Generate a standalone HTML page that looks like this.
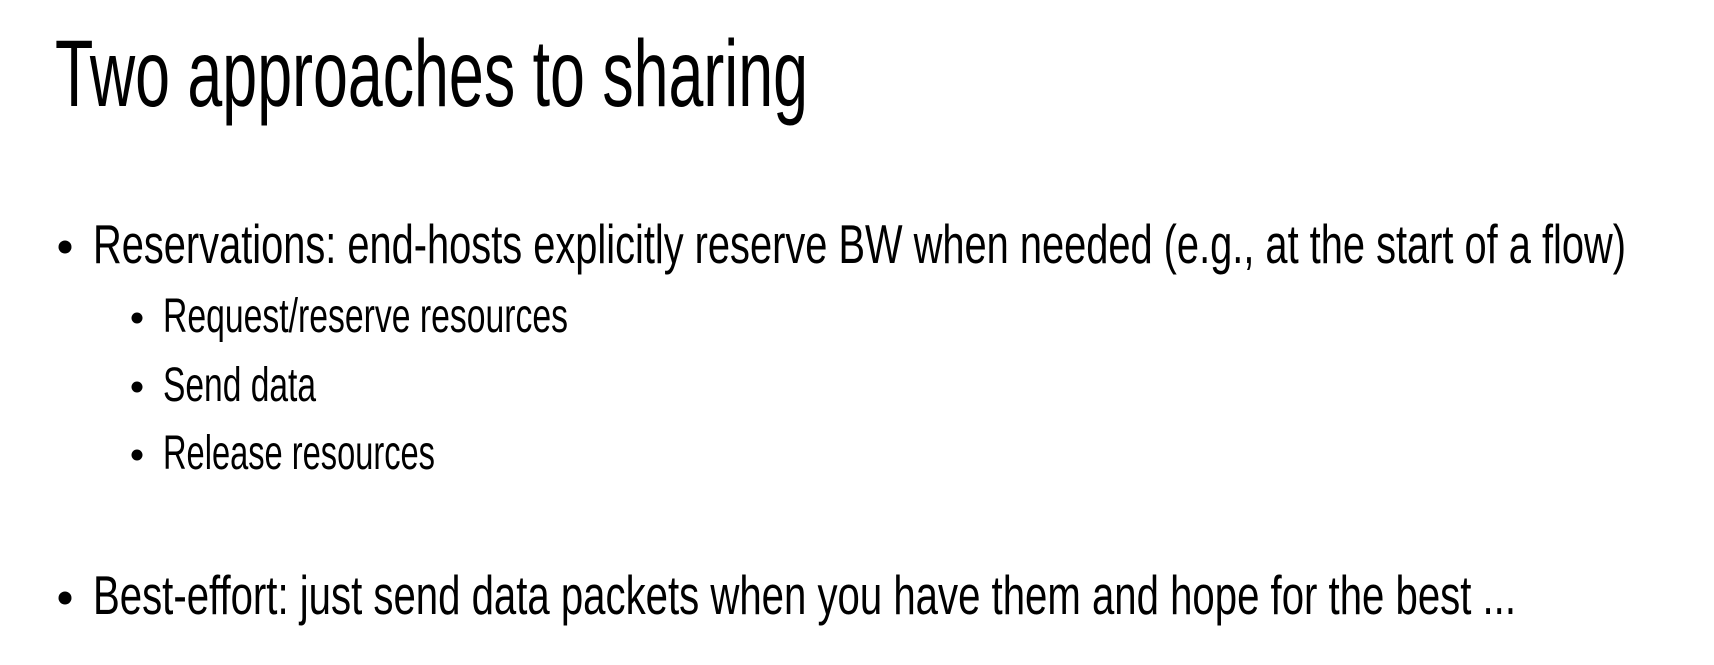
<!DOCTYPE html>
<html><head><meta charset="utf-8"><style>
html,body{margin:0;padding:0;background:#fff;}
svg{display:block}
text{font-family:"Liberation Sans Narrow","Liberation Sans",sans-serif;fill:#000;}
</style></head><body>
<svg width="1714" height="665" viewBox="0 0 1714 665" xmlns="http://www.w3.org/2000/svg">
<rect width="1714" height="665" fill="#fff"/>
<text x="55" y="106" font-size="95" textLength="753" lengthAdjust="spacingAndGlyphs">Two approaches to sharing</text>
<circle cx="65" cy="247" r="6.5" fill="#000"/>
<text x="93" y="263" font-size="55" textLength="1533" lengthAdjust="spacingAndGlyphs">Reservations: end-hosts explicitly reserve BW when needed (e.g., at the start of a flow)</text>
<circle cx="137" cy="318" r="5.5" fill="#000"/>
<text x="163" y="332" font-size="48" textLength="405" lengthAdjust="spacingAndGlyphs">Request/reserve resources</text>
<circle cx="137" cy="387" r="5.5" fill="#000"/>
<text x="163" y="401" font-size="48" textLength="153" lengthAdjust="spacingAndGlyphs">Send data</text>
<circle cx="137" cy="455" r="5.5" fill="#000"/>
<text x="163" y="469" font-size="48" textLength="272" lengthAdjust="spacingAndGlyphs">Release resources</text>
<circle cx="65" cy="598" r="6.5" fill="#000"/>
<text x="93" y="614" font-size="55" textLength="1423" lengthAdjust="spacingAndGlyphs">Best-effort: just send data packets when you have them and hope for the best ...</text>
</svg>
</body></html>
